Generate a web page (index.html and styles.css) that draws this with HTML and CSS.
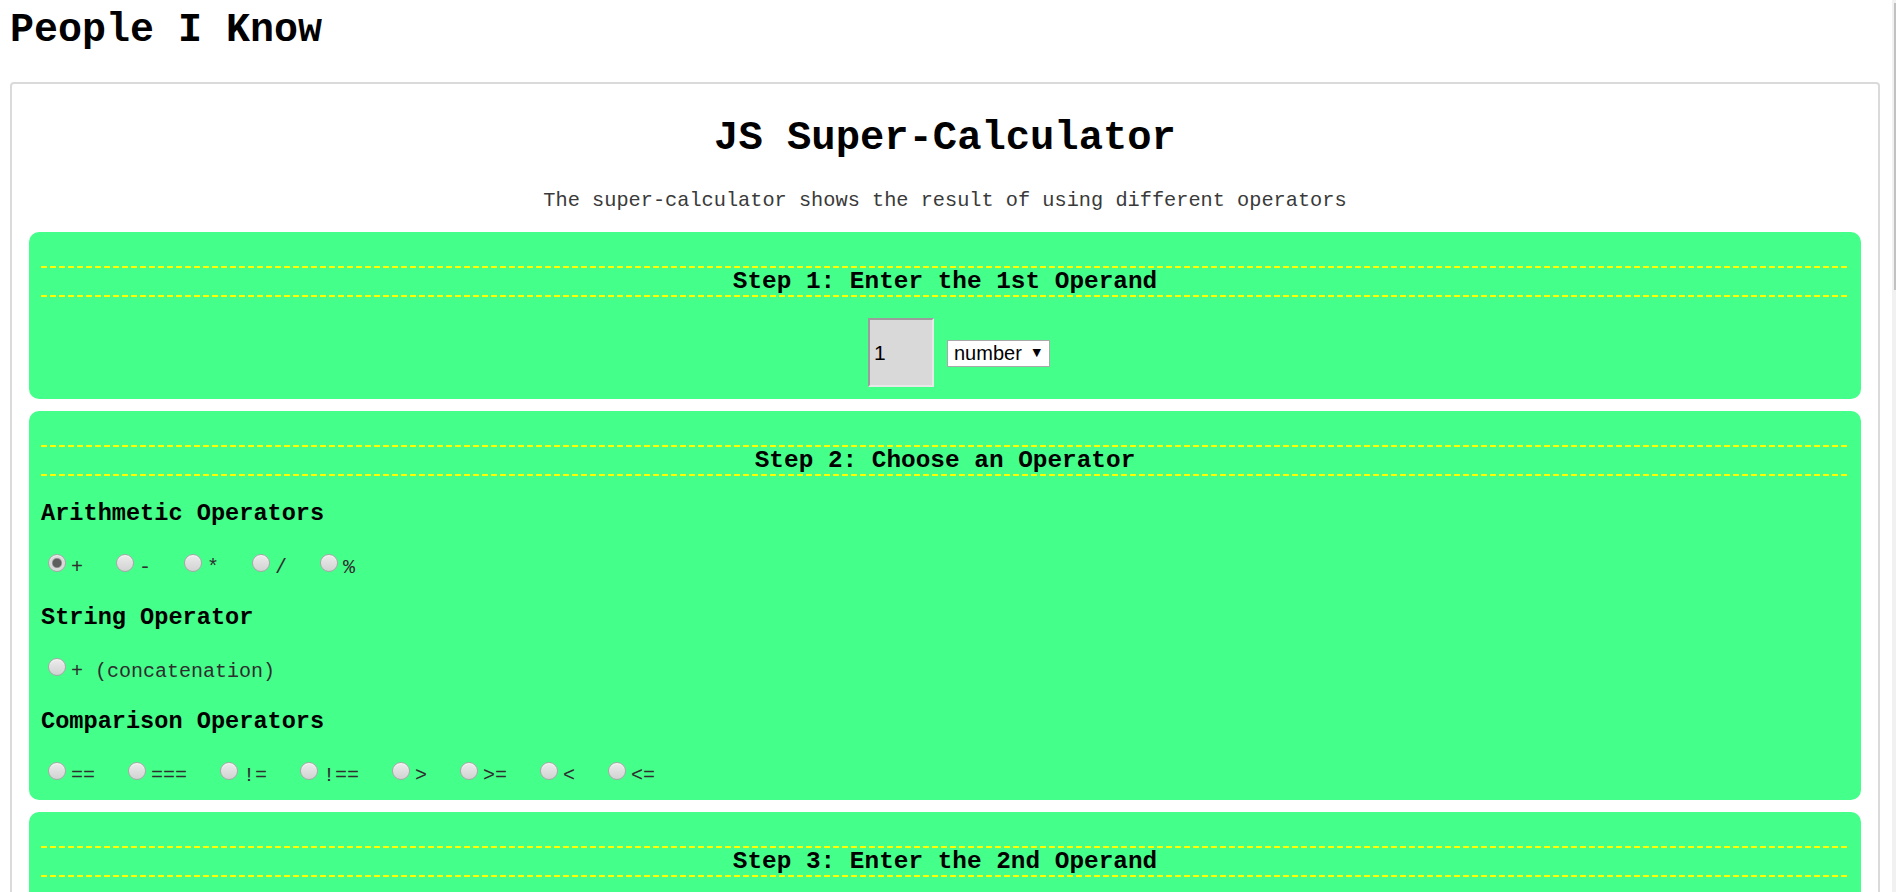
FILE: index.html
```html
<!DOCTYPE html>
<html lang="en">
<head>
<meta charset="utf-8">
<title>People I Know</title>
<link rel="stylesheet" href="styles.css">
</head>
<body>
<h1 class="page-title">People I Know</h1>
<main class="calculator">
  <h2 class="calc-title">JS Super-Calculator</h2>
  <p class="calc-subtitle">The super-calculator shows the result of using different operators</p>

  <section class="step">
    <h3 class="step-title">Step 1: Enter the 1st Operand</h3>
    <div class="operand-row">
      <input class="operand" type="text" value="1">
      <span class="select-wrap"><select class="type-select"><option>number</option><option>string</option><option>boolean</option></select></span>
    </div>
  </section>

  <section class="step">
    <h3 class="step-title">Step 2: Choose an Operator</h3>
    <h4 class="group-title">Arithmetic Operators</h4>
    <div class="radio-row"><label class="opt"><input type="radio" name="op" checked>+</label><label class="opt"><input type="radio" name="op">-</label><label class="opt"><input type="radio" name="op">*</label><label class="opt"><input type="radio" name="op">/</label><label class="opt"><input type="radio" name="op">%</label></div>
    <h4 class="group-title">String Operator</h4>
    <div class="radio-row"><label class="opt"><input type="radio" name="op">+ (concatenation)</label></div>
    <h4 class="group-title">Comparison Operators</h4>
    <div class="radio-row"><label class="opt"><input type="radio" name="op">==</label><label class="opt"><input type="radio" name="op">===</label><label class="opt"><input type="radio" name="op">!=</label><label class="opt"><input type="radio" name="op">!==</label><label class="opt"><input type="radio" name="op">&gt;</label><label class="opt"><input type="radio" name="op">&gt;=</label><label class="opt"><input type="radio" name="op">&lt;</label><label class="opt"><input type="radio" name="op">&lt;=</label></div>
  </section>

  <section class="step">
    <h3 class="step-title">Step 3: Enter the 2nd Operand</h3>
    <div class="operand-row">
      <input class="operand" type="text" value="2">
      <span class="select-wrap"><select class="type-select"><option>number</option><option>string</option><option>boolean</option></select></span>
    </div>
  </section>
</main>
<div class="scrollbar"><div class="scrollbar-thumb"></div></div>
</body>
</html>
```

FILE: styles.css
```css
html {
  overflow: hidden;
  background: #ffffff;
}

body {
  margin: 8px 16px 8px 10px;
  font-family: "Courier New", "Liberation Mono", monospace;
  color: #000000;
}

.page-title {
  margin: 0 0 29px;
  font-size: 40px;
  font-weight: bold;
  line-height: 45px;
}

.calculator {
  border: 2px solid #dadada;
  border-radius: 4px;
  padding: 0 17px 17px;
  min-height: 2600px;
}

.calc-title {
  margin: 32px 0 0;
  font-size: 40.5px;
  font-weight: bold;
  text-align: center;
  line-height: 45px;
}

.calc-subtitle {
  margin: 28px 0 20px;
  font-size: 20.3px;
  text-align: center;
  color: #3a3a3a;
  line-height: 23px;
}

.step {
  background: #44ff8a;
  border-radius: 10px;
  padding: 12px;
  margin-bottom: 12px;
}

.step-title {
  margin: 22px 0 0;
  border-top: 2px dashed #ffff00;
  border-bottom: 2px dashed #ffff00;
  font-size: 24.4px;
  font-weight: bold;
  line-height: 27px;
  text-align: center;
  border-image: repeating-linear-gradient(90deg, #ffff00 0 6px, transparent 6px 9px) 2 0 / 2px 0 stretch;
}

.operand-row {
  display: flex;
  justify-content: center;
  align-items: center;
  gap: 13px;
  margin-top: 21px;
  padding-left: 28px;
}

.operand {
  box-sizing: border-box;
  width: 66px;
  height: 69px;
  margin: 0;
  padding: 0 0 0 4px;
  border: 2px solid;
  border-color: #9c9c9c #e8e8e8 #e8e8e8 #9c9c9c;
  background: #d9d9d9;
  font-family: "Liberation Sans", Arial, sans-serif;
  font-size: 21px;
  color: #000000;
  outline: none;
}

.select-wrap {
  position: relative;
  display: inline-block;
  margin-top: 2px;
}

.select-wrap::after {
  content: "\25BC";
  position: absolute;
  right: 9px;
  top: 5px;
  font-family: "DejaVu Sans", sans-serif;
  font-size: 11px;
  line-height: 16px;
  color: #000000;
  pointer-events: none;
}

.type-select {
  appearance: none;
  -webkit-appearance: none;
  box-sizing: border-box;
  width: 103px;
  height: 27px;
  margin: 0;
  padding: 0 0 0 6px;
  border: 1px solid #a9a9a9;
  border-radius: 0;
  background: #ffffff;
  font-family: "Liberation Sans", Arial, sans-serif;
  font-size: 20px;
  line-height: 25px;
  color: #000000;
}

.group-title {
  margin: 24px 0 0;
  font-size: 23.6px;
  font-weight: bold;
  line-height: 27px;
}

.radio-row {
  display: flex;
  align-items: baseline;
  margin-top: 27px;
  height: 26px;
}

.opt {
  display: block;
  margin-right: 26px;
  font-size: 20px;
  line-height: 26px;
  color: #2e2e2e;
  white-space: pre;
}

.opt input {
  appearance: none;
  -webkit-appearance: none;
  box-sizing: border-box;
  display: inline-block;
  width: 18px;
  height: 18px;
  margin: 0 5px 1px 7px;
  vertical-align: baseline;
  border: 1px solid #a8a8a8;
  border-radius: 50%;
  background: linear-gradient(#ececec, #d2d2d2);
  box-shadow: inset 0 1px 1px rgba(255, 255, 255, 0.7);
}

.opt input:checked {
  background: radial-gradient(circle, #5e5e5e 0 4px, #8a8a8a 4.5px, #d8d8d8 5.5px);
}

.scrollbar {
  position: fixed;
  top: 0;
  right: 0;
  width: 4px;
  height: 100%;
  background: #f1f1f1;
}

.scrollbar-thumb {
  margin: 3px 0 0 2px;
  height: 287px;
  background: #c1c1c1;
}
```
